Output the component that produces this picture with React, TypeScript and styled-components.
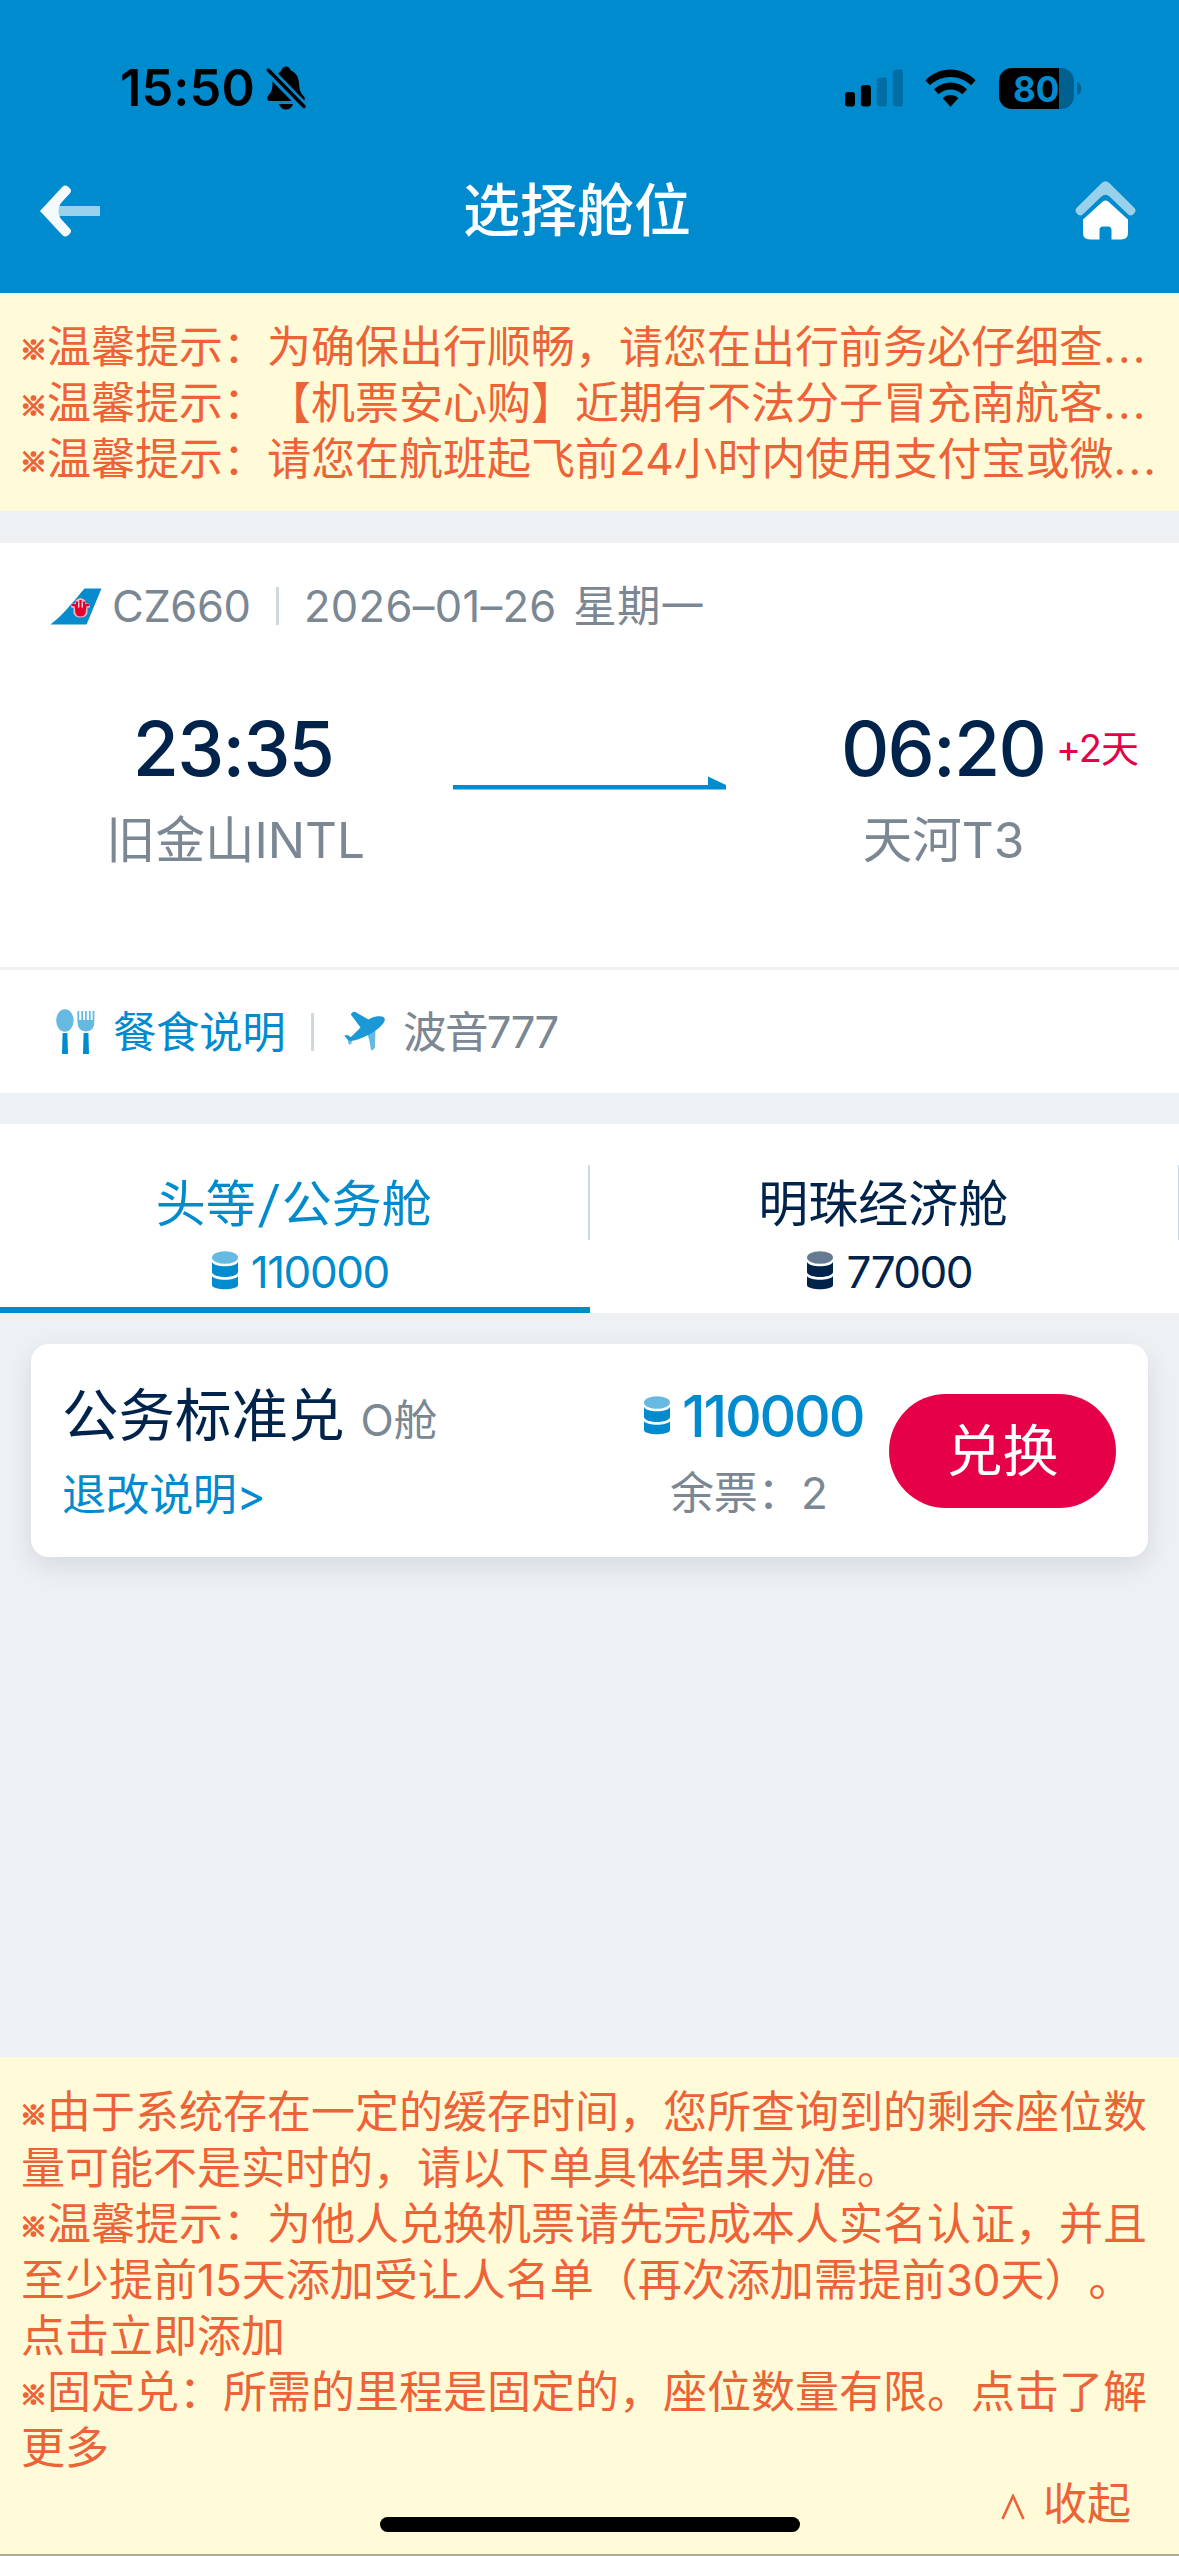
import React from "react";
import styled, { createGlobalStyle, css } from "styled-components";

const color = {
  brand: "#008bce",
  brandLight: "#66b9e1",
  navy: "#00234b",
  gray: "#7b8792",
  page: "#edf1f4",
  notice: "#fffbd9",
  warn: "#ed6237",
  red: "#e60048",
  line: "#d0d8df",
};

const GlobalStyle = createGlobalStyle`
  * { box-sizing: border-box; }
  body {
    margin: 0;
    background: ${color.page};
    font-family: Inter, "Noto Sans CJK SC", sans-serif;
    text-spacing-trim: space-all;
    -webkit-font-smoothing: antialiased;
  }
  p, h1, h2 { margin: 0; font-weight: 400; }
  button { border: 0; padding: 0; background: none; font-family: inherit; }
  svg { display: block; flex: none; }
`;

const Screen = styled.div`
  width: 1179px;
  height: 2556px;
  display: flex;
  flex-direction: column;
  background: ${color.page};
  overflow: hidden;
`;

const Header = styled.header`
  height: 293px;
  flex: none;
  background: ${color.brand};
`;

const StatusBar = styled.div`
  height: 125px;
  padding: 50px 105px 0 120px;
  display: flex;
  justify-content: space-between;
  align-items: flex-start;
`;

const Clock = styled.div`
  display: flex;
  align-items: center;
  height: 76px;
  font-size: 50.5px;
  font-weight: 600;
  line-height: 76px;
  letter-spacing: 0.1px;
  gap: 11px;
`;

const StatusIcons = styled.div`
  display: flex;
  align-items: center;
  height: 76px;
`;

const Battery = styled.div`
  position: relative;
  width: 75px;
  height: 41px;
  margin-left: 23px;
  border-radius: 13px;
  background: linear-gradient(to right, #000 60px, #00608f 60px);
  color: ${color.brand};
  font-size: 35px;
  font-weight: 700;
  line-height: 42px;
  padding-left: 14px;
  letter-spacing: 0;

  &::after {
    content: "";
    position: absolute;
    left: 78px;
    top: 14px;
    width: 4px;
    height: 13px;
    border-radius: 0 4px 4px 0 / 0 7px 7px 0;
    background: #00608f;
  }
`;

const NavBar = styled.nav`
  height: 168px;
  display: grid;
  grid-template-columns: 188px 1fr 210px;
  align-items: center;
  padding: 3px 43px 0 40px;
`;

const Title = styled.h1`
  font-size: 57px;
  font-weight: 500;
  line-height: 70px;
  color: #fff;
  text-align: center;
`;

const NavEnd = styled.div`
  display: flex;
  justify-content: flex-end;
`;

const Notice = styled.section<{ $bottom?: boolean }>`
  flex: none;
  background: ${color.notice};
  color: ${color.warn};
  font-size: 44px;
  line-height: 56px;
  padding: ${(p) => (p.$bottom ? "27px 22px 0 21px" : "26px 0 24px 21px")};
  ${(p) =>
    p.$bottom &&
    css`
      height: 499px;
      margin-top: auto;
      border-bottom: 2px solid #aeac99;
    `}
`;

const NoticeLine = styled.p<{ $single?: boolean }>`
  white-space: ${(p) => (p.$single ? "nowrap" : "normal")};
`;

const Mark = styled.span`
  display: inline-block;
  width: 26px;
  font-family: "Noto Sans CJK SC", sans-serif;
  font-size: 27px;
  font-weight: 900;
  line-height: 30px;
  text-indent: -1px;
  vertical-align: 3px;
  -webkit-text-stroke: 1.6px currentColor;
`;

const Dots = styled.span`
  letter-spacing: 2.2px;
`;

const Collapse = styled.div`
  display: flex;
  justify-content: flex-end;
  align-items: center;
  gap: 18px;
  padding-right: 26px;
`;

const HomeIndicator = styled.div`
  position: absolute;
  left: 380px;
  top: 2517px;
  width: 420px;
  height: 15px;
  border-radius: 8px;
  background: #000;
`;

const Flight = styled.section`
  flex: none;
  margin-top: 32px;
  height: 550px;
  background: #fff;
`;

const FlightTop = styled.div`
  display: flex;
  align-items: center;
  height: 126px;
  padding-left: 50px;
  font-size: 43.5px;
  line-height: 60px;
  color: ${color.gray};
`;

const FlightNo = styled.span`
  width: 139px;
  margin-left: 10px;
  letter-spacing: -0.4px;
  white-space: nowrap;
`;

const FlightDate = styled.span`
  letter-spacing: 0.3px;
  word-spacing: 4px;
`;

const Bar = styled.span<{ $before: number; $after: number }>`
  width: 3px;
  height: 38px;
  margin: 0 ${(p) => p.$after}px 0 ${(p) => p.$before}px;
  background: ${color.line};
`;

const Route = styled.div`
  display: grid;
  grid-template-columns: 453px 273px 1fr;
  height: 298px;
  padding-top: 36px;
`;

const Stop = styled.div<{ $arrive?: boolean }>`
  display: flex;
  flex-direction: column;
  align-items: center;
  ${(p) =>
    p.$arrive
      ? css`
          width: 197px;
          margin-left: 119px;
        `
      : css`
          width: 100%;
          padding-left: 18px;
        `}
`;

const Time = styled.div<{ $shift?: number }>`
  position: relative;
  font-size: 75px;
  font-weight: 500;
  line-height: 88px;
  color: ${color.navy};
  letter-spacing: -1.8px;
  margin-left: ${(p) => p.$shift ?? 0}px;
`;

const DayShift = styled.span`
  position: absolute;
  left: 215px;
  top: 19px;
  font-size: 38px;
  font-weight: 400;
  line-height: 48px;
  color: ${color.red};
  white-space: nowrap;
  letter-spacing: -1px;
`;

const Airport = styled.div`
  margin-top: 6px;
  font-size: 49.5px;
  line-height: 82px;
  color: ${color.gray};
  white-space: nowrap;
`;

const ArrowCell = styled.div`
  padding-top: 71px;
`;

const FlightFoot = styled.div`
  display: flex;
  align-items: center;
  height: 126px;
  border-top: 3px solid ${color.page};
  padding-left: 56px;
  font-size: 43.5px;
  line-height: 60px;
  color: ${color.gray};
`;

const Meal = styled.span`
  margin-left: 17px;
  width: 177px;
  color: ${color.brand};
  letter-spacing: -0.4px;
`;

const Plane = styled.span`
  margin-left: 17px;
  letter-spacing: -1.6px;
`;

const Tabs = styled.div`
  flex: none;
  display: grid;
  grid-template-columns: 589.5px 589.5px;
  height: 189px;
  margin-top: 31px;
  background: #fff;
`;

const Tab = styled.button<{ $active?: boolean }>`
  position: relative;
  display: flex;
  flex-direction: column;
  align-items: center;
  justify-content: flex-start;
  padding: 49px 2px 0 0;
  color: ${(p) => (p.$active ? color.brand : color.navy)};
  border-bottom: 6px solid ${(p) => (p.$active ? color.brand : "#fff")};

  &::after {
    content: "";
    position: absolute;
    right: 0;
    top: 41px;
    width: 1.5px;
    height: 75px;
    background: ${color.line};
  }
`;

const TabName = styled.span`
  font-size: 50px;
  line-height: 62px;
`;

const Slash = styled.span`
  display: inline-block;
  margin: 0 4px;
  transform: skewX(-7deg);
`;

const TabMiles = styled.span`
  display: flex;
  align-items: center;
  gap: 13px;
  margin-top: 8px;
  padding-left: 13px;
  font-size: 44px;
  line-height: 58px;
  letter-spacing: -1.5px;
`;

const Fare = styled.article`
  flex: none;
  display: grid;
  grid-template-columns: 550px 1fr 227px;
  height: 213px;
  margin: 31px 31px 0;
  padding: 38px 32px 0 31px;
  border-radius: 18px;
  background: #fff;
  box-shadow: 0 9px 26px rgba(0, 20, 40, 0.1);
`;

const FareName = styled.h2`
  display: flex;
  align-items: baseline;
  gap: 16px;
  font-size: 56.5px;
  line-height: 68px;
  color: ${color.navy};
  white-space: nowrap;
`;

const Cabin = styled.small`
  font-size: 43.5px;
  color: ${color.gray};
`;

const Rules = styled.p`
  margin-top: 13px;
  font-size: 44px;
  line-height: 56px;
  color: ${color.brand};
  letter-spacing: -0.4px;
`;

const Price = styled.div`
  display: flex;
  align-items: center;
  gap: 12px;
  margin: 1px 0 0 32px;
  font-size: 57px;
  font-weight: 500;
  line-height: 68px;
  color: ${color.brand};
  letter-spacing: -2.2px;
`;

const Left = styled.p`
  margin: 14px 0 0 58px;
  font-size: 44px;
  line-height: 56px;
  color: ${color.gray};
  white-space: nowrap;
  letter-spacing: -0.3px;
`;

const Redeem = styled.button`
  width: 227px;
  height: 114px;
  margin-top: 12px;
  border-radius: 57px;
  background: ${color.red};
  color: #fff;
  font-size: 56px;
  line-height: 114px;
`;

const BellOff = () => (
  <svg width="40" height="44" viewBox="0 0 40 44">
    <path d="M12 7.500C14 6 15 5.500 15.300 4.500C16 1.800 18 .5 20 .5S24 1.800 24.700 4.500C30 6.500 32.500 11 33 17C33.400 24 34 26 38 30.500C39 32 39 33 38.300 34.500Z" />
    <path d="M6.500 15.500L25.500 35H4C1 35 .5 32 2 30C5.500 26 6.500 24 6.500 15.500Z" />
    <path d="M13 38H27C26 41.500 23.500 43.500 20 43.500S14 41.500 13 38Z" />
    <path d="M2.300 4L38 40.500" stroke="#000" strokeWidth="3.400" strokeLinecap="round" />
  </svg>
);

const Signal = () => (
  <svg width="58" height="38" viewBox="0 0 58 38">
    <rect x="0" y="23" width="10" height="14.500" rx="3" />
    <rect x="15.900" y="16" width="10" height="21.500" rx="3" />
    <g fill="#006ea4">
      <rect x="31.900" y="8.500" width="10" height="29" rx="3" />
      <rect x="47.900" y=".5" width="10" height="37" rx="3" />
    </g>
  </svg>
);

const WifiSvg = styled.svg`
  margin-left: 22px;
`;

const Wifi = () => (
  <WifiSvg width="51" height="38" viewBox="0 0 51 38">
    <path d="M.4 11.200C14.500-3.200 36.500-3.200 50.600 11.200L46 16.300C34.500 5.300 16.500 5.300 5 16.300Z" />
    <path d="M9 20.300C18.500 11.300 32.500 11.300 42 20.300L37.400 25.300C30.500 19 20.500 19 13.600 25.300Z" />
    <path d="M17.700 29.300C22 25 29 25 33.300 29.300L25.500 37.800Z" />
  </WifiSvg>
);

const Back = () => (
  <svg width="61" height="52" viewBox="0 0 61 52">
    <path d="M17 21H59C60 21 60 21 60 22V30C60 31 60 31 59 31H17Z" fill="#99d1eb" />
    <path d="M0 26L22 2.200C24 0 26 .2 28 1.600L30 3.400C31.600 5 31.300 6.500 30 8.200L21.500 17.500C17.500 22 17.500 30 21.500 34.500L30 43.800C31.300 45.500 31.600 47 30 48.600L28 50.400C26 51.800 24 52 22 49.800Z" fill="#f5fafd" />
  </svg>
);

const Home = () => (
  <svg width="61" height="59" viewBox="0 0 61 59">
    <path d="M27 1.800Q30.500-1.500 34 1.800L59.500 27Q61.500 29.500 59.500 32L57.800 33.700Q55.500 35.500 53 33.300L34.500 15.500Q30.500 12 26.500 15.500L8 33.300Q5.500 35.500 3.200 33.700L1.500 32Q-.5 29.500 1.500 27Z" fill="#99d1eb" />
    <path d="M27.500 20.800Q30.500 18 33.500 20.800L53 38.500V52Q53 58.500 46 58.500H36.500V49Q36.500 45.500 33 45.500H28Q24.500 45.500 24.500 49V58.500H15Q8 58.500 8 52V38.500Z" fill="#fff" />
  </svg>
);

const Tail = () => (
  <svg width="52" height="37" viewBox="0 0 52 37">
    <path d="M.5 36.500C12 28 23 14 34.500 .5H51.500L36.500 36.500Z" fill="#068bcd" />
    <path d="M21 17.500Q22 14.500 25 15.500L26 12L29 10.500L30.500 10L32 10.500L35 12L36 15.500Q39 14.500 40 17.500Q40.500 20 37.500 20V25Q36 29.500 30.500 29.500T23.500 25V20Q20.500 20 21 17.500Z" fill="#f7b6c3" />
    <path d="M22 17.800Q23 16 25.500 17.500L27 25V13.500M30.500 26V12M39 17.800Q38 16 35.500 17.500L34 25V13.500" fill="none" stroke="#e4002b" strokeWidth="2.300" />
    <path d="M25.500 19H35.500V25Q34.500 28.500 30.500 28.500T25.500 25Z" fill="#e4002b" />
    <path d="M28.700 15V20M32.300 15V20" stroke="#fff" strokeWidth=".7" />
  </svg>
);

const Cutlery = () => (
  <svg width="40" height="46" viewBox="0 0 40 46">
    <ellipse cx="8.900" cy="11.500" rx="8.700" ry="11.300" fill={color.brandLight} />
    <path d="M6.600 24H11.400L12 45H6Z" fill={color.brand} />
    <path d="M21.400 2H23.200V11H25.300V2H27.200V11H29V2H30.800V11H32.900V2H34.700V11H36.600V2H38.400V12Q38.400 22.500 30 22.500T21.400 12Z" fill={color.brandLight} />
    <path d="M27.600 24H32.400L33 45H27Z" fill={color.brand} />
  </svg>
);

const PlaneIcon = () => (
  <svg width="42" height="41" viewBox="0 0 42 41">
    <path d="M22.500 20L31.500 15.500L31 36Q30.500 38.500 27 39.500Q26 29 22.500 20Z" fill={color.brandLight} />
    <path d="M3.500 28L8 29.500L7.500 32.500L5 34Z" fill={color.brandLight} />
    <path d="M6.800 3.500Q8 .2 11 .8L24.500 8.500C29 5.800 33 5 37.500 5.500C41.500 6 41.500 9 39.500 12C34 19.500 22 26.500 10 29.500Q5 30.800 3.500 28.500L.3 24.500L3 24L7 26L16.500 16.500Z" fill="#1b98d6" />
  </svg>
);

const Coins = ({ main = color.brand, top = color.brandLight }: { main?: string; top?: string }) => (
  <svg width="26" height="43" viewBox="0 0 26 43">
    <ellipse cx="13" cy="6.500" rx="13" ry="6.300" fill={top} />
    <path d="M0 11C3 16.800 23 16.800 26 11V21.500C23.500 27.500 2.500 27.500 0 21.500Z" fill={main} />
    <path d="M0 25C3 30 23 30 26 25V34.500C23.500 39.500 2.500 39.500 0 34.500Z" fill={main} />
  </svg>
);

const RouteArrow = () => (
  <svg width="273" height="15" viewBox="0 0 273 15">
    <path d="M0 9H255V.5L273 9V13.500H0Z" fill={color.brand} />
  </svg>
);

const CaretSvg = styled.svg`
  margin-top: 6px;
`;

const Caret = () => (
  <CaretSvg width="24" height="26" viewBox="0 0 24 26">
    <path d="M1.500 25L12 2L22.500 25" fill="none" stroke={color.warn} strokeWidth="2.600" />
  </CaretSvg>
);

const tips = [
  "温馨提示：为确保出行顺畅，请您在出行前务必仔细查",
  "温馨提示：【机票安心购】近期有不法分子冒充南航客",
  "温馨提示：请您在航班起飞前24小时内使用支付宝或微",
];

const remarks = [
  "由于系统存在一定的缓存时间，您所查询到的剩余座位数量可能不是实时的，请以下单具体结果为准。",
  "温馨提示：为他人兑换机票请先完成本人实名认证，并且至少提前15天添加受让人名单（再次添加需提前30天）。点击立即添加",
  "固定兑：所需的里程是固定的，座位数量有限。点击了解更多",
];

export default function App() {
  return (
    <Screen lang="zh-CN">
      <GlobalStyle />
      <Header>
        <StatusBar>
          <Clock>
            15:50
            <BellOff />
          </Clock>
          <StatusIcons>
            <Signal />
            <Wifi />
            <Battery>80</Battery>
          </StatusIcons>
        </StatusBar>
        <NavBar>
          <Back />
          <Title>选择舱位</Title>
          <NavEnd>
            <Home />
          </NavEnd>
        </NavBar>
      </Header>

      <Notice>
        {tips.map((tip) => (
          <NoticeLine key={tip} $single>
            <Mark>※</Mark>
            {tip}
            <Dots>...</Dots>
          </NoticeLine>
        ))}
      </Notice>

      <Flight>
        <FlightTop>
          <Tail />
          <FlightNo>CZ660</FlightNo>
          <Bar $before={25} $after={25} />
          <FlightDate>2026–01–26 星期一</FlightDate>
        </FlightTop>
        <Route>
          <Stop>
            <Time $shift={-5}>23:35</Time>
            <Airport>旧金山INTL</Airport>
          </Stop>
          <ArrowCell>
            <RouteArrow />
          </ArrowCell>
          <Stop $arrive>
            <Time $shift={-1}>
              06:20
              <DayShift>+2天</DayShift>
            </Time>
            <Airport>天河T3</Airport>
          </Stop>
        </Route>
        <FlightFoot>
          <Cutlery />
          <Meal>餐食说明</Meal>
          <Bar $before={21} $after={30} />
          <PlaneIcon />
          <Plane>波音777</Plane>
        </FlightFoot>
      </Flight>

      <Tabs>
        <Tab $active>
          <TabName>
            头等<Slash>/</Slash>公务舱
          </TabName>
          <TabMiles>
            <Coins />
            110000
          </TabMiles>
        </Tab>
        <Tab>
          <TabName>明珠经济舱</TabName>
          <TabMiles>
            <Coins main={color.navy} top="#667b93" />
            77000
          </TabMiles>
        </Tab>
      </Tabs>

      <Fare>
        <div>
          <FareName>
            公务标准兑<Cabin>O舱</Cabin>
          </FareName>
          <Rules>退改说明&gt;</Rules>
        </div>
        <div>
          <Price>
            <Coins />
            110000
          </Price>
          <Left>余票：2</Left>
        </div>
        <Redeem>兑换</Redeem>
      </Fare>

      <Notice $bottom>
        {remarks.map((remark) => (
          <NoticeLine key={remark}>
            <Mark>※</Mark>
            {remark}
          </NoticeLine>
        ))}
        <Collapse>
          <Caret />
          收起
        </Collapse>
      </Notice>
      <HomeIndicator />
    </Screen>
  );
}
